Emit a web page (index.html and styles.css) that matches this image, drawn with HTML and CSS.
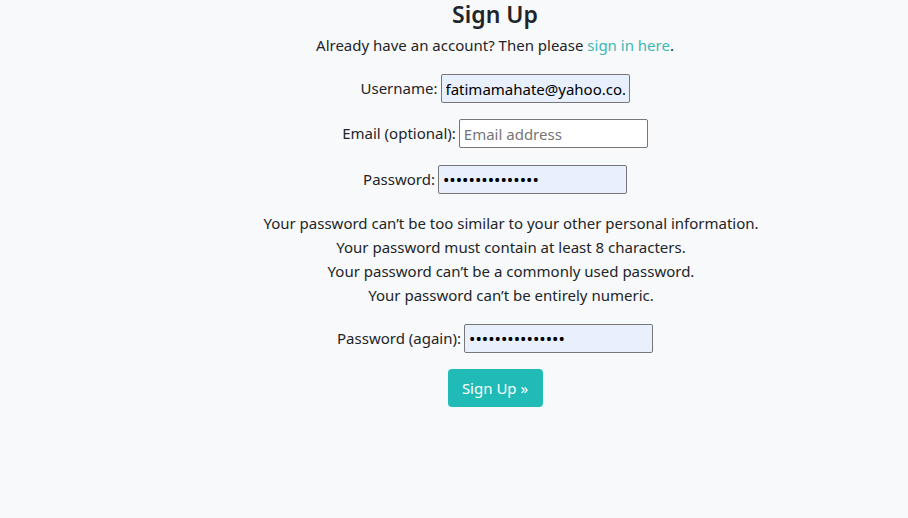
FILE: index.html
```html
<!DOCTYPE html>
<html lang="en">
<head>
<meta charset="utf-8">
<title>Sign Up</title>
<link rel="stylesheet" href="styles.css">
</head>
<body>
<main class="page">
  <h1 class="title">Sign Up</h1>
  <p class="lead">Already have an account? Then please <a href="#" class="link">sign in here</a>.</p>
  <form class="form">
    <p class="row"><label for="u">Username:</label> <input id="u" class="field filled" type="text" value="fatimamahate@yahoo.co.uk"></p>
    <p class="row"><label for="e">Email (optional):</label> <input id="e" class="field" type="email" placeholder="Email address"></p>
    <p class="row"><label for="p1">Password:</label> <input id="p1" class="field filled secret" type="password" value="123456789012345"></p>
    <ul class="help">
      <li>Your password can’t be too similar to your other personal information.</li>
      <li>Your password must contain at least 8 characters.</li>
      <li>Your password can’t be a commonly used password.</li>
      <li>Your password can’t be entirely numeric.</li>
    </ul>
    <p class="row"><label for="p2">Password (again):</label> <input id="p2" class="field filled secret" type="password" value="123456789012345"></p>
    <button class="btn" type="button">Sign Up »</button>
  </form>
</main>
</body>
</html>
```
FILE: styles.css
```css
html, body {
  margin: 0;
  padding: 0;
  background: #f8f9fa;
}
body {
  font-family: "Noto Sans", "Open Sans", sans-serif;
  font-size: 15px;
  color: #212529;
  line-height: 1.5;
}
.page {
  margin-left: 82px;
  display: flex;
  flex-direction: column;
  align-items: center;
}
.title {
  margin: 0;
  font-size: 23px;
  font-weight: 600;
  line-height: 28px;
}
.lead {
  margin: 6px 0 0;
  line-height: 22px;
}
.link {
  color: #3cb8b3;
  text-decoration: none;
}
.form {
  display: flex;
  flex-direction: column;
  align-items: center;
}
.row {
  margin: 0;
  display: flex;
  align-items: center;
  gap: 3px;
}
.form .row:first-child { margin-top: 18px; }
.form .row + .row { margin-top: 16px; }
.form .row:nth-child(3) { margin-top: 17px; }
.field {
  box-sizing: border-box;
  width: 189px;
  height: 29px;
  border: 1px solid #767676;
  border-radius: 2px;
  background: #fff;
  font-family: "Noto Sans", "Open Sans", sans-serif;
  font-size: 15px;
  padding: 1px 4px;
  color: #000;
}
.field.secret { font-size: 17px; }
.field::placeholder { color: #757575; }
.field.filled { background: #e8f0fe; }
.help {
  list-style: none;
  margin: 17px 0 0;
  padding: 0 0 0 32px;
  text-align: center;
  line-height: 24px;
}
.help + .row { margin-top: 17px; }
.btn {
  margin-top: 16px;
  width: 95px;
  height: 38px;
  border: none;
  border-radius: 4px;
  background: #20bbb7;
  color: #fff;
  font-family: "Noto Sans", "Open Sans", sans-serif;
  font-size: 15px;
}
```
